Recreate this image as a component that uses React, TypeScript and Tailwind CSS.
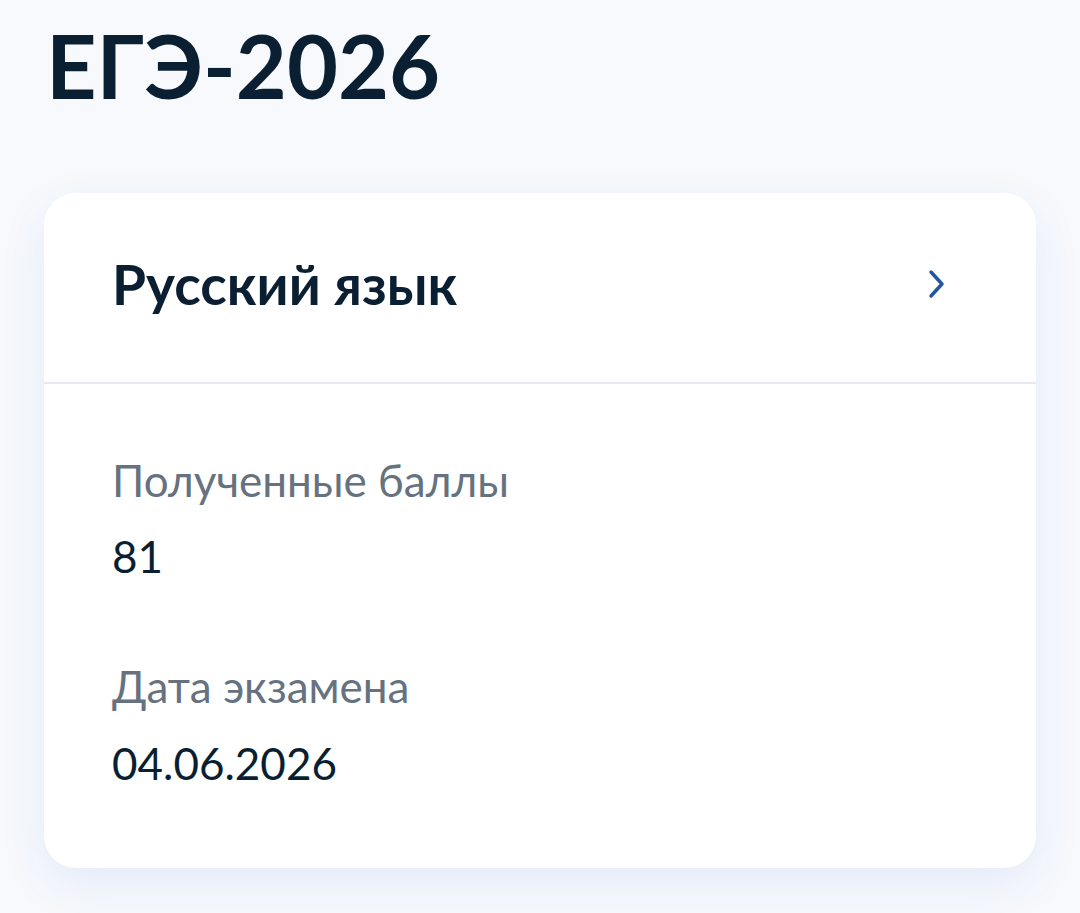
const Field = ({ label, value, first }: { label: string; value: string; first?: boolean }) => {
    return (
        <div className={first ? "" : "mt-[77px]"}>
            <div className="text-[44px] leading-[1.2] text-[#66727f]">{label}</div>
            <div className="mt-[24px] text-[44px] leading-[1.2] text-[#0b1f33]">{value}</div>
        </div>
    )
}

const App = () => {
    return (
        <div className="min-h-[913px] w-[1080px] bg-[#f7f9fc] font-['Lato','Noto_Sans',sans-serif] overflow-hidden">
            <h1 className="pl-[46px] pt-[13px] text-[88px] font-bold leading-[1.2] text-[#0b1f33]">ЕГЭ-2026</h1>
            <div className="ml-[44px] mt-[74px] w-[992px] rounded-[32px] bg-white shadow-[0_16px_48px_rgba(40,90,210,0.09)]">
                <div className="flex items-center justify-between pl-[68px] pr-[90px] pt-[58px] pb-[65px]">
                    <span className="text-[55px] font-bold leading-[1.2] text-[#0b1f33]">Русский язык</span>
                    <svg width="18" height="30" viewBox="0 0 18 30" fill="none">
                        <path d="M3 3 L14 15 L3 27" stroke="#2556a3" strokeWidth="3.5" strokeLinecap="round" strokeLinejoin="round" />
                    </svg>
                </div>
                <div className="h-[2px] bg-[#e6e9ee]" />
                <div className="pl-[68px] pt-[70px] pb-[78px]">
                    <Field label="Полученные баллы" value="81" first />
                    <Field label="Дата экзамена" value="04.06.2026" />
                </div>
            </div>
        </div>
    )
}

export default App
